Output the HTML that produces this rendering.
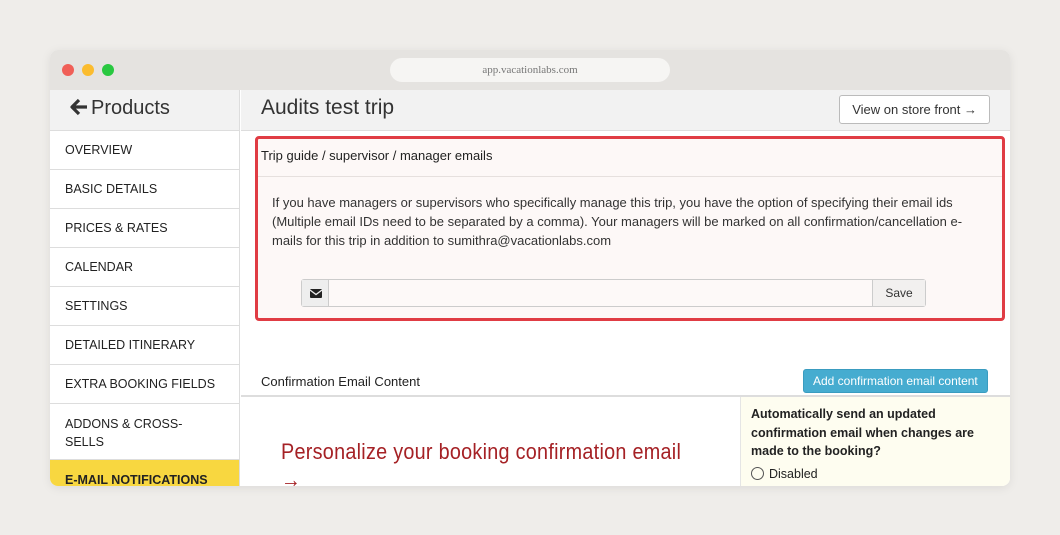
<!DOCTYPE html>
<html><head><style>
*{box-sizing:border-box;margin:0;padding:0}
body{width:1060px;height:535px;background:#efedea;font-family:"Liberation Sans",sans-serif;position:relative;overflow:hidden}
.win{position:absolute;left:50px;top:50px;width:960px;height:436px;background:#fff;border-radius:8px;overflow:hidden;box-shadow:0 2px 10px rgba(0,0,0,.08)}
.bar{height:40px;background:#e5e3e0;position:relative}
.dot{position:absolute;top:14px;width:12px;height:12px;border-radius:50%}
.url{position:absolute;left:340px;top:8px;width:280px;height:24px;background:#f6f5f3;border-radius:12px;text-align:center;font:11px "Liberation Serif",serif;color:#777;line-height:24px}
.side{position:absolute;left:0;top:40px;width:190px;height:396px;background:#f7f7f7;border-right:1px solid #ddd}
.side .hd{height:41px;border-bottom:1px solid #ddd;font-size:20px;color:#333;padding:7px 0 0 20px;background:#f2f2f2}
.side .it{height:39px;border-bottom:1px solid #ddd;font-size:12.5px;color:#222;padding:12px 15px;background:#fff}
.main{position:absolute;left:191px;top:40px;right:0;bottom:0}
.top{height:41px;background:#f2f2f2;border-bottom:1px solid #ddd;position:relative}
.top h1{font-weight:normal;font-size:21px;color:#333;position:absolute;left:20px;top:6px}
.btn{position:absolute;right:20px;top:5px;border:1px solid #bbb;border-radius:3px;background:#fff;font-size:13px;padding:6px 12px;color:#333}
.box{position:absolute;left:14px;top:46px;width:750px;height:185px;border:3px solid #e03c44;border-radius:4px;background:#fdf8f7}
.box .t{font-size:13px;color:#222;padding:9px 3px;border-bottom:1px solid #e6e0de;height:38px}
.box p{font-size:13px;line-height:19px;color:#333;padding:16px 0 0 14px;width:718px}
.inp{position:absolute;left:43px;top:140px;width:625px;height:28px;border:1px solid #ccc;border-radius:3px;background:#fdf9f8}
.inp .ic{position:absolute;left:0;top:0;width:27px;height:26px;background:#eee;border-right:1px solid #ccc}
.inp .sv{position:absolute;right:0;top:0;width:53px;height:26px;background:#f2f0ef;border-left:1px solid #ccc;font-size:12px;text-align:center;line-height:26px;color:#333}
</style></head><body>
<div class="win">
<div class="bar"><div class="dot" style="left:12px;background:#f05f57"></div><div class="dot" style="left:32px;background:#fbbc2e"></div><div class="dot" style="left:52px;background:#29c840"></div><div class="url">app.vacationlabs.com</div></div>
<div class="side"><div class="hd"><svg width="18" height="18" viewBox="0 0 18 18" style="vertical-align:-2px;margin-right:3px"><path d="M9 2 L2 9 L9 16 M2.5 9 H17" stroke="#333" stroke-width="3.2" fill="none" stroke-linejoin="round"/></svg>Products</div>
<div class="it">OVERVIEW</div><div class="it">BASIC DETAILS</div><div class="it">PRICES &amp; RATES</div><div class="it">CALENDAR</div><div class="it">SETTINGS</div><div class="it">DETAILED ITINERARY</div><div class="it">EXTRA BOOKING FIELDS</div><div class="it" style="padding-top:11px;line-height:18px;height:56px">ADDONS &amp; CROSS-<br>SELLS</div><div class="it" style="background:#f8d740;font-weight:bold;height:30px;padding-top:13px">E-MAIL NOTIFICATIONS</div></div>
<div class="main">
<div class="top"><h1>Audits test trip</h1><div class="btn">View on store front →</div></div>
<div class="box"><div class="t">Trip guide / supervisor / manager emails</div>
<p>If you have managers or supervisors who specifically manage this trip, you have the option of specifying their email ids (Multiple email IDs need to be separated by a comma). Your managers will be marked on all confirmation/cancellation e-mails for this trip in addition to sumithra@vacationlabs.com</p>
<div class="inp"><div class="ic"><svg width="27" height="26"><rect x="8" y="9" width="12" height="9" fill="#222" rx="1"/><path d="M8 10 L14 14.5 L20 10" stroke="#eee" stroke-width="1.3" fill="none"/></svg></div><div class="sv">Save</div></div></div>
<div style="position:absolute;left:20px;top:284px;font-size:13px;color:#222">Confirmation Email Content</div>
<div style="position:absolute;left:562px;top:279px;background:#46acd0;color:#fff;font-size:12px;padding:4px 9px;border-radius:3px;border:1px solid #3a9cc0">Add confirmation email content</div>
<div style="position:absolute;left:0;top:305px;right:0;height:2px;background:#ddd"></div>
<div style="position:absolute;left:40px;top:348px;font:22px 'Liberation Sans Narrow','Liberation Sans',sans-serif;color:#a52125;letter-spacing:0.3px;line-height:28px;transform:scaleX(.9);transform-origin:left">Personalize your booking confirmation email<br>→</div>
<div style="position:absolute;left:499px;top:307px;right:0;bottom:0;background:#fefdf0;border-left:1px solid #e5e5e5;padding:8px 10px;font-size:12.5px;line-height:18.5px;color:#222"><b>Automatically send an updated confirmation email when changes are made to the booking?</b><div style="margin-top:4px"><span style="display:inline-block;width:13px;height:13px;border:1px solid #555;border-radius:50%;vertical-align:-2px;margin-right:5px"></span>Disabled</div></div>
</div></div>
</body></html>
